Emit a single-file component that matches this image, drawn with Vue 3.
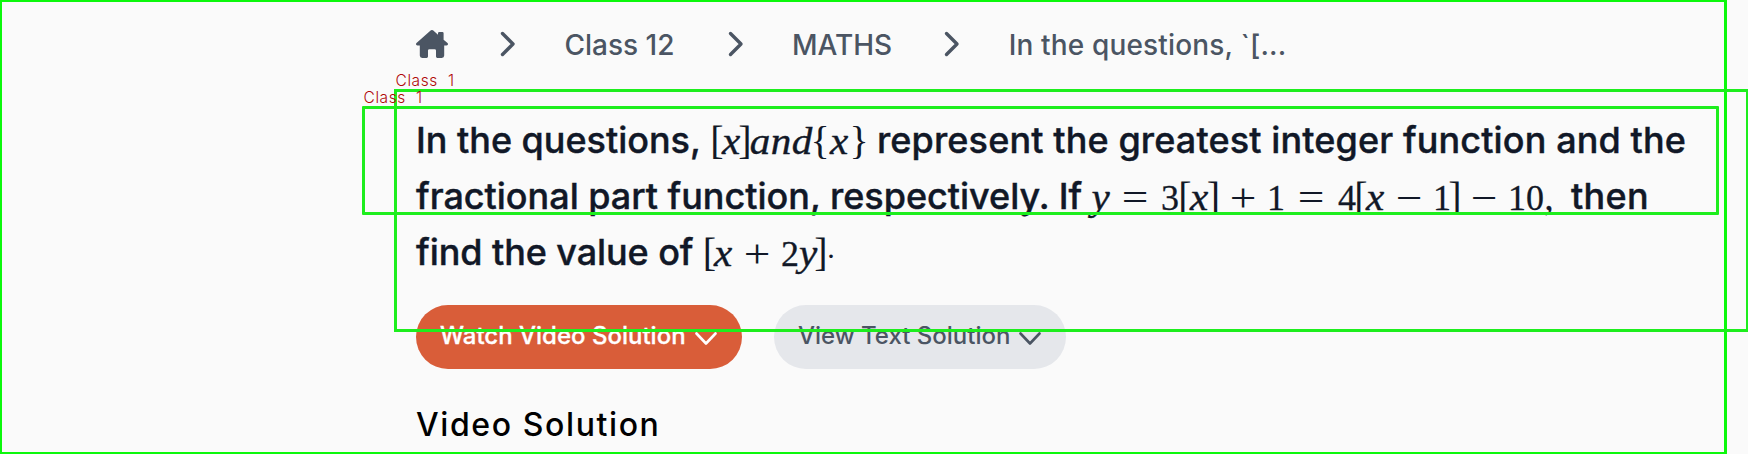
<script setup>
const crumbs = [
  { text: 'Class 12', cls: 'c1' },
  { text: 'MATHS', cls: 'c2' },
  { text: 'In the questions, `[...', cls: 'c3' },
]

// Each math token is [glyph, cell width, kind]
const lines = [
  [
    { text: 'In the questions,', width: 296, track: -0.02 },
    { math: [['[', 10, 'b'], ['x', 18, 'i'], [']', 10, 'b'], ['a', 20, 'i'], ['n', 22, 'i'], ['d', 20, 'i'], ['{', 16, 'b'], ['x', 22, 'i'], ['}', 18, 'b']] },
    { text: 'represent the greatest integer function and the', gap: 9, track: 0.12 },
  ],
  [
    { text: 'fractional part function, respectively. If', width: 674, track: -0.02 },
    { math: [['y', 21, 'i'], ['=', 48, 'o'], ['3', 22, 'n'], ['[', 8, 'b'], ['x', 20, 'i'], [']', 9, 'b'], ['+', 50, 'o'], ['1', 16, 'n'], ['=', 54, 'o'], ['4', 18, 'n'], ['[', 10, 'b'], ['x', 18, 'i'], ['−', 50, 'o'], ['1', 16, 'n'], [']', 10, 'b'], ['−', 48, 'o'], ['1', 18, 'n'], ['0', 18, 'n'], [',', 10, 'n']] },
    { text: 'then', gap: 17, track: 0.3 },
  ],
  [
    { text: 'find the value of', width: 290, track: -0.08 },
    { math: [['[', 7, 'b'], ['x', 20, 'i'], ['+', 48, 'o'], ['2', 18, 'n'], ['y', 18, 'i'], [']', 8, 'b'], ['·', 12, 'dot']] },
  ],
]

const wordStyle = (seg) => ({
  width: seg.width ? seg.width + 'px' : 'auto',
  marginLeft: (seg.gap || 0) + 'px',
  letterSpacing: seg.track + 'px',
})
</script>

<template>
  <div class="page">
    <nav class="crumbs">
      <svg class="home" width="32" height="28" viewBox="0 0 32 28">
        <path d="M14.6.6a2 2 0 0 1 2.7 0L22 4.7V3.2q0-1.2 1.2-1.2h3.2q1.2 0 1.2 1.2v6.5l3.9 3.4q.8.9.3 1.7-.4.6-1.4.6h-2.2v10.2q0 2.4-2.4 2.4h-4.4q-1.4 0-1.4-1.4v-6q0-1.4-1.4-1.4h-5.2q-1.4 0-1.4 1.4v6q0 1.4-1.4 1.4H6.2q-2.4 0-2.4-2.4V15.4H1.6q-1 0-1.4-.6-.5-.8.3-1.7z" />
      </svg>
      <template v-for="c in crumbs" :key="c.text">
        <svg class="sep" :class="c.cls" width="16" height="26" viewBox="0 0 16 26">
          <path d="M2.5 2.5 13 13 2.5 23.5" />
        </svg>
        <span class="crumb" :class="c.cls">{{ c.text }}</span>
      </template>
    </nav>

    <h1 class="question">
      <span v-for="(line, i) in lines" :key="i" class="line">
        <template v-for="(seg, j) in line" :key="j">
          <span v-if="seg.math" class="math"><span v-for="(m, k) in seg.math" :key="k" class="tok" :class="m[2]" :style="{ width: m[1] + 'px' }">{{ m[0] }}</span></span>
          <span v-else class="words" :style="wordStyle(seg)">{{ seg.text }}</span>
        </template>
      </span>
    </h1>

    <div class="actions">
      <button class="btn primary">
        <span>Watch Video Solution</span>
        <svg width="22" height="14" viewBox="0 0 22 14"><path d="M1.5 1.5 11 11.5 20.5 1.5" /></svg>
      </button>
      <button class="btn secondary">
        <span>View Text Solution</span>
        <svg width="22" height="14" viewBox="0 0 22 14"><path d="M1.5 1.5 11 11.5 20.5 1.5" /></svg>
      </button>
    </div>

    <h2 class="subtitle">Video Solution</h2>

    <div class="box outer"></div>
    <div class="box wide"></div>
    <div class="box inner"></div>
    <span class="tag tag-wide">Class 1</span>
    <span class="tag tag-inner">Class 1</span>
  </div>
</template>

<style>
body {
  background: #fafafa;
}
</style>

<style scoped>
.page {
  position: relative;
  box-sizing: border-box;
  width: 1748px;
  height: 454px;
  padding-left: 416px;
  overflow: hidden;
  background: #fafafa;
  font-family: Inter, "Liberation Sans", sans-serif;
}
.crumbs {
  display: flex;
  align-items: center;
  height: 88px;
  color: #4b5563;
}
.home {
  fill: #4b5563;
}
.sep {
  flex: none;
  fill: none;
  stroke: #4b5563;
  stroke-width: 3.4;
  stroke-linecap: round;
  stroke-linejoin: round;
  margin: 0 48.5px 0 52px;
}
.sep.c2 {
  margin-left: 53.5px;
  margin-right: 48px;
}
.crumb {
  font-size: 28px;
  font-weight: 500;
  line-height: 40px;
  padding-top: 2px;
  white-space: pre;
}
.c3.crumb {
  letter-spacing: 0.15px;
}
.question {
  margin: 24px 0 0;
  font-size: 36px;
  font-weight: 500;
  color: #111827;
}
.line {
  display: flex;
  align-items: baseline;
  height: 56px;
  line-height: 56px;
  white-space: nowrap;
}
.words {
  flex: none;
  -webkit-text-stroke: 0.4px currentColor;
}
.math {
  display: flex;
  align-items: baseline;
  flex: none;
  font-family: "Liberation Serif", serif;
  font-weight: 400;
  transform: translateY(0.5px);
}
.tok {
  flex: none;
  display: flex;
  justify-content: center;
}
.n {
  -webkit-text-stroke: 0.3px currentColor;
}
.dot {
  font-size: 30px;
}
.i {
  font-style: italic;
  font-size: 38px;
  -webkit-text-stroke: 0.4px currentColor;
  transform: scaleX(1.08);
}
.b {
  font-size: 40px;
}
.o {
  font-size: 40px;
  transform: translateY(1.5px) scaleX(1.18);
}
.actions {
  display: flex;
  gap: 32px;
  margin-top: 25px;
}
.btn {
  display: flex;
  align-items: center;
  justify-content: space-between;
  height: 64px;
  padding: 0 25px 3px 24px;
  border: 0;
  border-radius: 32px;
  font-family: inherit;
  font-size: 24px;
  font-weight: 500;
}
.btn svg {
  fill: none;
  stroke: currentColor;
  stroke-width: 2.6;
  stroke-linecap: round;
  stroke-linejoin: round;
  margin-top: 7px;
}
.primary {
  width: 326px;
  background: #d95d39;
  color: #fff;
  -webkit-text-stroke: 0.3px currentColor;
}
.secondary {
  width: 292px;
  background: #e5e7eb;
  color: #4b5563;
}
.subtitle {
  margin: 36px 0 0;
  font-size: 32px;
  font-weight: 500;
  line-height: 40px;
  letter-spacing: 1.6px;
  color: #000;
}
.box {
  position: absolute;
  box-sizing: border-box;
  border: 3px solid #1dee1d;
}
.outer {
  left: -1px;
  top: -1px;
  width: 1728px;
  height: 456px;
  border-color: #0cf80c;
}
.wide {
  left: 394px;
  top: 89px;
  width: 1355px;
  height: 243px;
}
.inner {
  left: 362px;
  top: 106px;
  width: 1357px;
  height: 109px;
  border-radius: 1px;
}
.tag {
  position: absolute;
  font-size: 15.5px;
  font-weight: 300;
  line-height: 16px;
  letter-spacing: 0.6px;
  word-spacing: 5px;
  color: #b00808;
}
.tag-wide {
  left: 395.5px;
  top: 73px;
}
.tag-inner {
  left: 363.5px;
  top: 90px;
}
</style>
